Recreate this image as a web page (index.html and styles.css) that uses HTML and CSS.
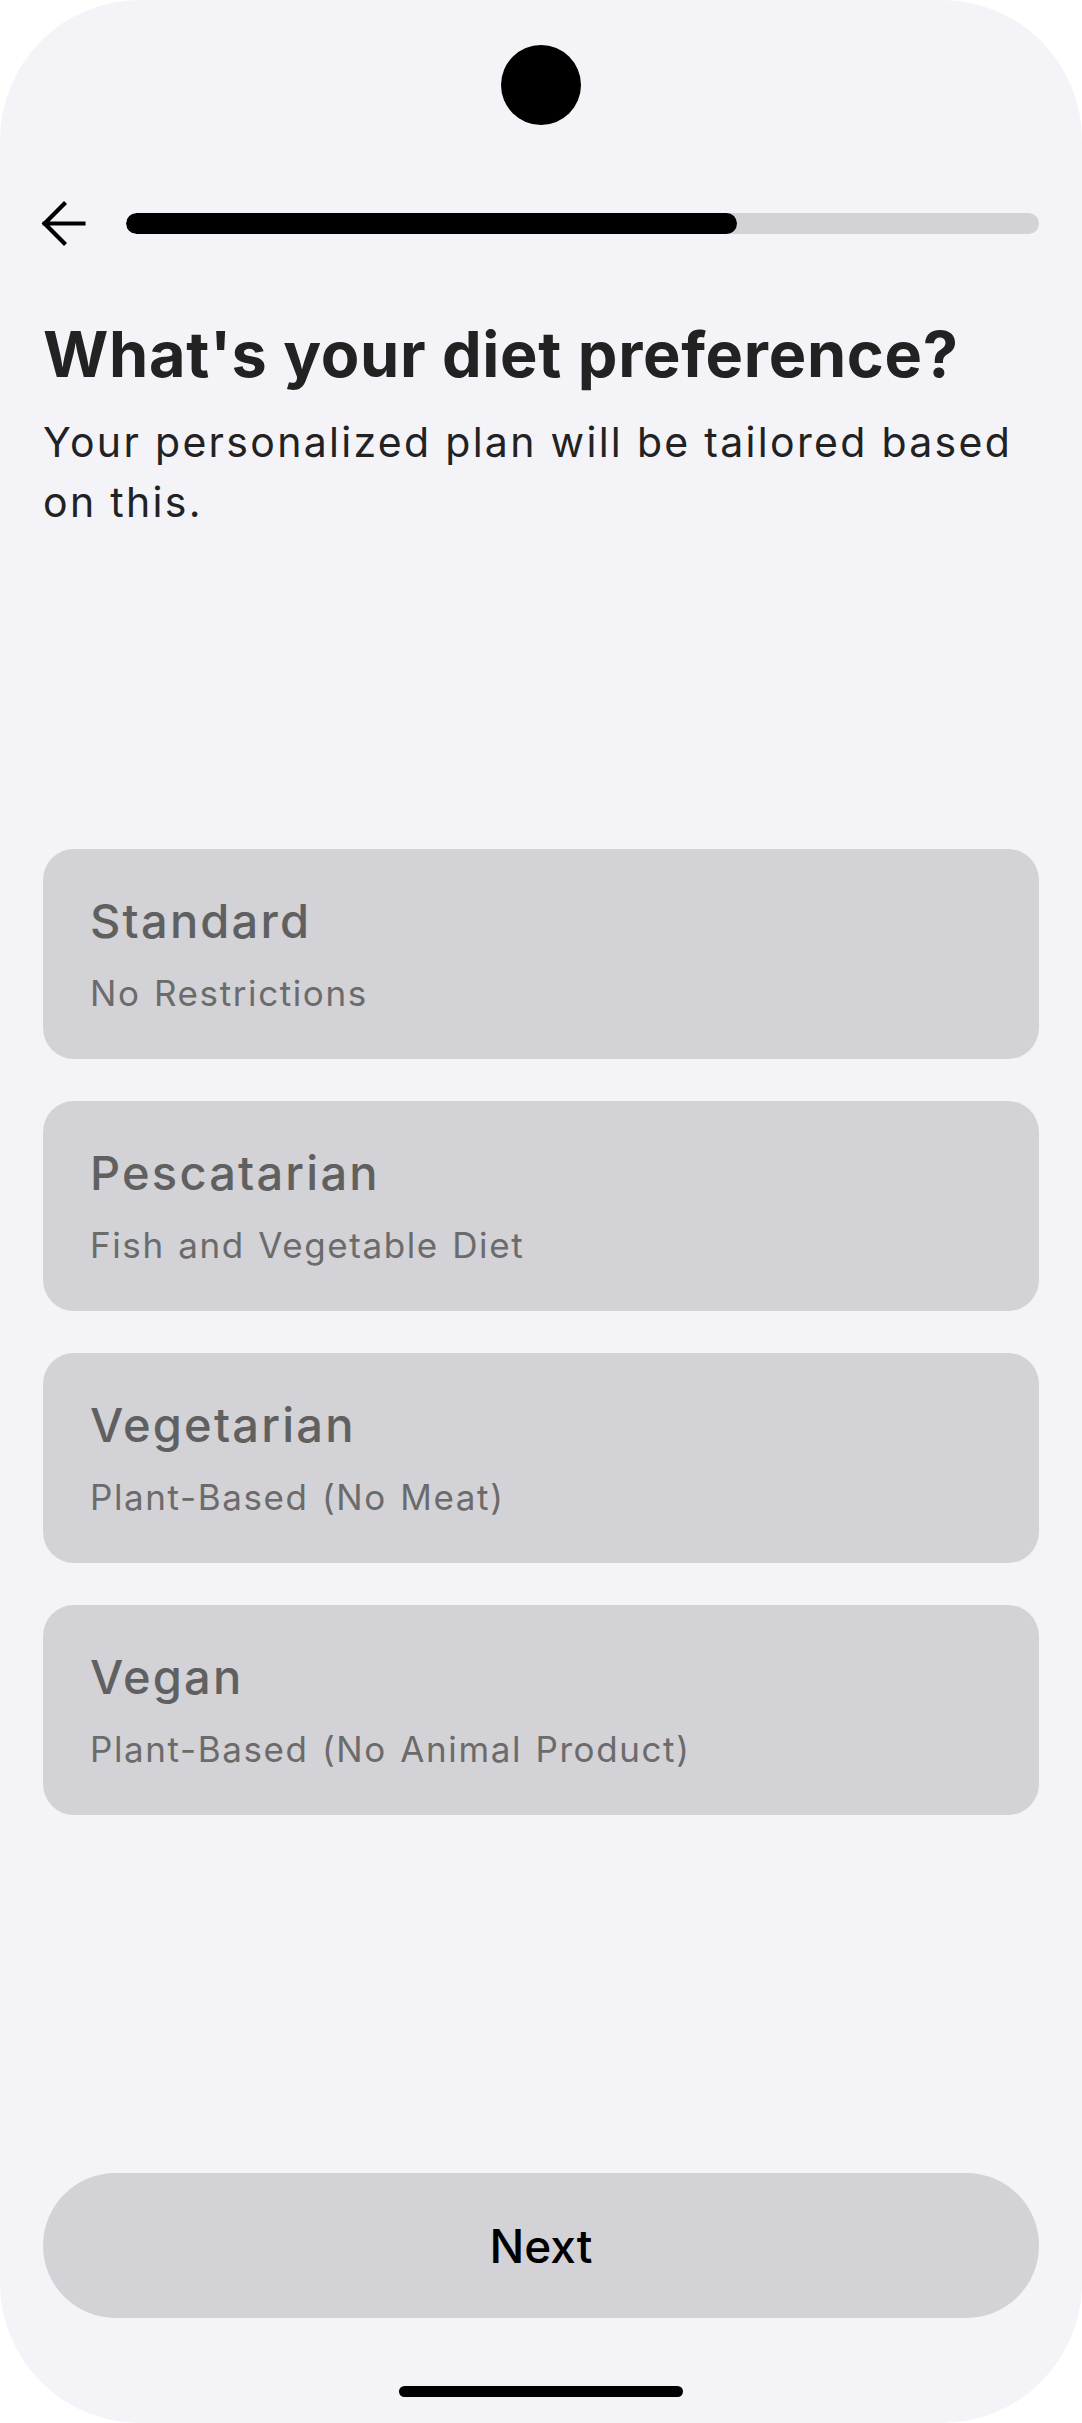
FILE: index.html
```html
<!DOCTYPE html>
<html lang="en">
<head>
<meta charset="utf-8">
<title>Diet preference</title>
<link rel="stylesheet" href="styles.css">
</head>
<body>
<div class="phone">
  <div class="camera"></div>
  <div class="topbar">
    <svg class="back" viewBox="0 0 24 24" aria-label="Back">
      <path d="M19.6 12H4.8M12.2 4.6L4.8 12l7.4 7.4" fill="none" stroke="#000" stroke-width="1.6" stroke-linecap="square" stroke-linejoin="miter"/>
    </svg>
    <div class="progress"><div class="progress-fill" style="width: 66.9%"></div></div>
  </div>
  <h1 class="title">What's your diet preference?</h1>
  <p class="subtitle">Your personalized plan will be tailored based on this.</p>
  <div class="options">
    <div class="option">
      <div class="option-title">Standard</div>
      <div class="option-sub">No Restrictions</div>
    </div>
    <div class="option">
      <div class="option-title">Pescatarian</div>
      <div class="option-sub">Fish and Vegetable Diet</div>
    </div>
    <div class="option">
      <div class="option-title">Vegetarian</div>
      <div class="option-sub">Plant-Based (No Meat)</div>
    </div>
    <div class="option">
      <div class="option-title">Vegan</div>
      <div class="option-sub">Plant-Based (No Animal Product)</div>
    </div>
  </div>
  <button class="next">Next</button>
  <div class="home-indicator"></div>
</div>
</body>
</html>
```
FILE: styles.css
```css
* { box-sizing: border-box; }
html, body { margin: 0; padding: 0; background: #ffffff; }
body { font-family: Inter, "Noto Sans", sans-serif; }

.phone {
  width: 1082px;
  height: 2423px;
  background: #f4f3f8;
  border-radius: 140px;
  overflow: hidden;
  display: flex;
  flex-direction: column;
  padding: 45px 43px 26px;
}

.camera {
  width: 80px;
  height: 80px;
  border-radius: 50%;
  background: #000;
  align-self: center;
  flex: none;
}

.topbar {
  display: flex;
  align-items: center;
  margin-top: 66px;
  height: 64px;
  flex: none;
}
.back {
  width: 63px;
  height: 63px;
  margin-left: -11px;
  flex: none;
}
.progress {
  flex: 1;
  height: 21px;
  margin-left: 31px;
  background: #d3d2d7;
  border-radius: 11px;
  overflow: hidden;
}
.progress-fill {
  height: 100%;
  background: #000;
  border-radius: 11px;
}

.title {
  margin: 59px 0 0;
  font-size: 63px;
  line-height: 80px;
  font-weight: 700;
  color: #222222;
  letter-spacing: 0.7px;
}
.subtitle {
  margin: 18px 0 0;
  font-size: 41px;
  line-height: 60px;
  font-weight: 400;
  color: #222222;
  letter-spacing: 2.3px;
}

.options {
  margin-top: 317px;
  display: flex;
  flex-direction: column;
  gap: 42px;
}
.option {
  height: 210px;
  background: #d3d2d7;
  border-radius: 31px;
  padding: 42px 47px 0;
  display: flex;
  flex-direction: column;
  gap: 17px;
}
.option-title {
  font-size: 47px;
  line-height: 60px;
  font-weight: 500;
  color: #606060;
  letter-spacing: 2.2px;
}
.option-sub {
  font-size: 35px;
  line-height: 50px;
  font-weight: 400;
  color: #6b6b6b;
  letter-spacing: 1.6px;
  word-spacing: 2px;
}

.next {
  margin-top: auto;
  height: 145px;
  width: 100%;
  border: none;
  border-radius: 73px;
  background: #d3d2d7;
  font-family: Inter, "Noto Sans", sans-serif;
  font-size: 46px;
  font-weight: 500;
  color: #000;
  flex: none;
}

.home-indicator {
  margin-top: 68px;
  width: 284px;
  height: 11px;
  border-radius: 6px;
  background: #000;
  align-self: center;
  flex: none;
}
```
